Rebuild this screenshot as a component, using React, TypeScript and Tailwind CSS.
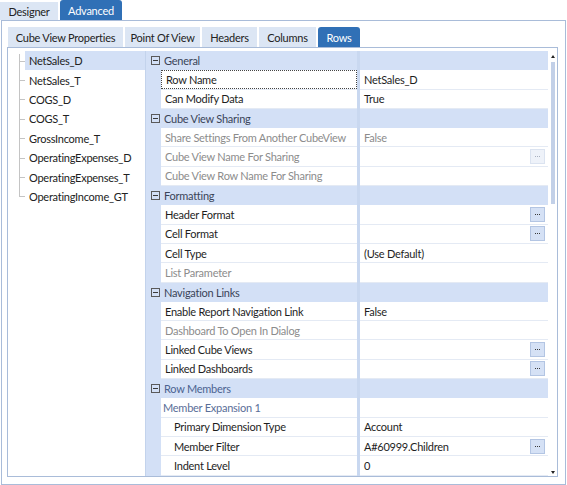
import React from 'react';

type Prop = {
  kind: 'prop';
  name: string;
  value?: string;
  dim?: boolean;
  btn?: boolean;
  btnDim?: boolean;
  indent?: boolean;
  focus?: boolean;
};
type Cat = { kind: 'cat'; label: string; blue?: boolean };
type Group = { kind: 'group'; label: string };
type GridRow = Prop | Cat | Group;

const rowsList = [
  'NetSales_D',
  'NetSales_T',
  'COGS_D',
  'COGS_T',
  'GrossIncome_T',
  'OperatingExpenses_D',
  'OperatingExpenses_T',
  'OperatingIncome_GT',
];

const gridRows: GridRow[] = [
  { kind: 'cat', label: 'General' },
  { kind: 'prop', name: 'Row Name', value: 'NetSales_D', focus: true },
  { kind: 'prop', name: 'Can Modify Data', value: 'True' },
  { kind: 'cat', label: 'Cube View Sharing' },
  { kind: 'prop', name: 'Share Settings From Another CubeView', value: 'False', dim: true },
  { kind: 'prop', name: 'Cube View Name For Sharing', dim: true, btn: true, btnDim: true },
  { kind: 'prop', name: 'Cube View Row Name For Sharing', dim: true },
  { kind: 'cat', label: 'Formatting' },
  { kind: 'prop', name: 'Header Format', btn: true },
  { kind: 'prop', name: 'Cell Format', btn: true },
  { kind: 'prop', name: 'Cell Type', value: '(Use Default)' },
  { kind: 'prop', name: 'List Parameter', dim: true },
  { kind: 'cat', label: 'Navigation Links' },
  { kind: 'prop', name: 'Enable Report Navigation Link', value: 'False' },
  { kind: 'prop', name: 'Dashboard To Open In Dialog', dim: true },
  { kind: 'prop', name: 'Linked Cube Views', btn: true },
  { kind: 'prop', name: 'Linked Dashboards', btn: true },
  { kind: 'cat', label: 'Row Members', blue: true },
  { kind: 'group', label: 'Member Expansion 1' },
  { kind: 'prop', name: 'Primary Dimension Type', value: 'Account', indent: true },
  { kind: 'prop', name: 'Member Filter', value: 'A#60999.Children', btn: true, indent: true },
  { kind: 'prop', name: 'Indent Level', value: '0', indent: true },
];

const innerTabs = [
  { label: 'Cube View Properties', w: 'w-[115px]' },
  { label: 'Point Of View', w: 'w-[75px]' },
  { label: 'Headers', w: 'w-[55px]' },
  { label: 'Columns', w: 'w-[57px]' },
  { label: 'Rows', w: 'w-[42px]', active: true },
];

function Expander() {
  return (
    <span className="w-[9px] h-[9px] border border-[#5a5a5a] flex items-center justify-center">
      <span className="w-[5px] h-px bg-[#3a3a3a]" />
    </span>
  );
}

function EllipsisButton({ dim }: { dim?: boolean }) {
  const dot = dim ? 'bg-[#a8b0bf]' : 'bg-[#3a3a3a]';
  return (
    <span
      className={`w-[15px] h-[15px] mr-[3px] flex items-center justify-center gap-px border ${
        dim ? 'bg-[#eef2f9] border-[#dbe3f0]' : 'bg-[#d5e1f5] border-[#b3c5e3]'
      }`}
    >
      <span className={`w-px h-px ${dot}`} />
      <span className={`w-px h-px ${dot}`} />
      <span className={`w-px h-px ${dot}`} />
    </span>
  );
}

function Row({ row }: { row: GridRow }) {
  if (row.kind === 'cat') {
    return (
      <div className="flex h-[19.3px] shrink-0 bg-[#d3e0f6]">
        <div className="w-[211px] flex items-center pl-[5px]">
          <Expander />
          <span className={`ml-[4px] ${row.blue ? 'text-[#4b6391]' : 'text-[#3a4458]'}`}>{row.label}</span>
        </div>
        <div className="w-[3px] bg-[#c9d8f0]" />
        <div className="flex-1" />
      </div>
    );
  }
  if (row.kind === 'group') {
    return (
      <div className="flex h-[19.3px] shrink-0">
        <div className="w-[15px] bg-[#d3e0f6]" />
        <div className="w-[196px] flex items-center pl-[2px] border-b border-[#e4eaf4] text-[#5a6e98]">
          {row.label}
        </div>
        <div className="w-[3px] bg-[#c9d8f0]" />
        <div className="flex-1 border-b border-[#e4eaf4]" />
      </div>
    );
  }
  const tone = row.dim ? 'text-[#8c8c8c]' : 'text-[#1e1e1e]';
  return (
    <div className="flex h-[19.3px] shrink-0">
      <div className="w-[15px] bg-[#d3e0f6]" />
      <div className="w-[196px] border-b border-[#e4eaf4] flex">
        <div
          className={`flex-1 flex items-center whitespace-nowrap ${row.indent ? 'pl-[13px]' : 'pl-[4px]'} ${tone} ${
            row.focus ? 'border border-dotted border-[#444] pl-[3px]' : ''
          }`}
        >
          {row.name}
        </div>
      </div>
      <div className="w-[3px] bg-[#c9d8f0]" />
      <div className={`flex-1 flex items-center justify-between pl-[4px] border-b border-[#e4eaf4] ${tone}`}>
        <span>{row.value ?? ''}</span>
        {row.btn && <EllipsisButton dim={row.btnDim} />}
      </div>
    </div>
  );
}

function Scrollbar() {
  return (
    <div className="w-[9px] flex flex-col items-center bg-white">
      <span className="mt-[4px] w-0 h-0 border-l-[2.5px] border-r-[2.5px] border-b-[3px] border-l-transparent border-r-transparent border-b-[#222]" />
      <span className="mt-[4px] w-[4px] h-[142px] bg-[#c2d0e8]" />
      <span className="flex-1" />
      <span className="mb-[2px] w-0 h-0 border-l-[2.5px] border-r-[2.5px] border-t-[3px] border-l-transparent border-r-transparent border-t-[#222]" />
    </div>
  );
}

export default function App() {
  return (
    <div
      className="w-[567px] h-[485px] bg-white text-[11px] tracking-[-0.25px] leading-none overflow-hidden flex flex-col"
      style={{ fontFamily: 'Lato, "Open Sans", sans-serif' }}
    >
      {/* top level tabs */}
      <div className="h-[20px] flex items-end gap-[2px] shrink-0">
        <div className="w-[58px] h-[18px] bg-[#dce6f4] flex items-center justify-center text-[#222]">Designer</div>
        <div className="w-[62px] h-[20px] bg-[#3070b6] rounded-t-[3px] flex items-center justify-center text-white">
          Advanced
        </div>
      </div>

      <div className="ml-[1px] w-[565px] flex-1 min-h-0 border border-[#a9bcd9] pl-[5px] pr-[7px] pt-[6px] pb-[7px] flex flex-col">
        {/* sub tabs */}
        <div className="h-[20px] flex gap-[2px] pl-[1px] shrink-0">
          {innerTabs.map((t) => (
            <div
              key={t.label}
              className={`${t.w} h-full flex items-center justify-center ${
                t.active ? 'bg-[#3070b6] text-white rounded-t-[3px]' : 'bg-[#dce6f4] text-[#222]'
              }`}
            >
              {t.label}
            </div>
          ))}
        </div>

        <div className="flex-1 min-h-0 border border-[#a9bcd9] pt-[3px] flex overflow-hidden">
          {/* rows tree */}
          <div className="w-[137px] shrink-0 bg-white">
            {rowsList.map((name, i) => (
              <div key={name} className="flex h-[19.4px]">
                <div className="relative w-[17px] h-full shrink-0">
                  <span
                    className={`absolute left-[11px] border-l border-[#c4c4c4] ${
                      i === 0 ? 'top-[3px]' : 'top-0'
                    } ${i === rowsList.length - 1 ? 'bottom-1/2' : 'bottom-0'}`}
                  />
                  <span className="absolute left-[11px] top-1/2 w-[6px] border-t border-[#c4c4c4]" />
                </div>
                <div className={`flex-1 flex items-center pl-[4px] text-[#222] ${i === 0 ? 'bg-[#d3e0f6]' : ''}`}>
                  {name}
                </div>
              </div>
            ))}
          </div>

          {/* property grid */}
          <div className="flex-1 flex border-l border-[#c3d3ec] overflow-hidden">
            <div className="flex-1 flex flex-col">
              {gridRows.map((r, i) => (
                <Row key={i} row={r} />
              ))}
            </div>
            <Scrollbar />
          </div>
        </div>
      </div>
    </div>
  );
}
